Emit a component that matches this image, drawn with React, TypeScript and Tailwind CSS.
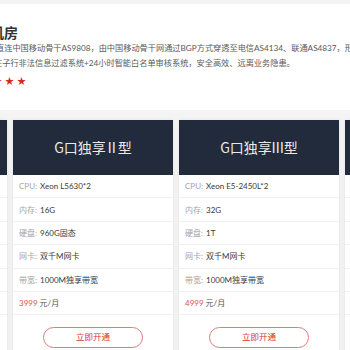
import React from "react";

type Plan = {
  name: string;
  num: string;
  cpu: string;
  ram: string;
  disk: string;
  nic: string;
  bw: string;
  price: string;
};

const plans: Plan[] = [
  { name: "G口独享", num: "Ⅰ", cpu: "Xeon E5-2620*2", ram: "8G", disk: "500G", nic: "双千M网卡", bw: "1000M独享带宽", price: "2999" },
  { name: "G口独享", num: "Ⅱ", cpu: "Xeon L5630*2", ram: "16G", disk: "960G固态", nic: "双千M网卡", bw: "1000M独享带宽", price: "3999" },
  { name: "G口独享", num: "Ⅲ", cpu: "Xeon E5-2450L*2", ram: "32G", disk: "1T", nic: "双千M网卡", bw: "1000M独享带宽", price: "4999" },
  { name: "G口独享", num: "Ⅳ", cpu: "Xeon E5-2650*2", ram: "64G", disk: "2T", nic: "双千M网卡", bw: "1000M独享带宽", price: "5999" },
];

function Row({ label, value }: { label: string; value: string }) {
  return (
    <div className="h-[23.4px] flex items-center px-[6px] border-b border-[#f1f1f1] text-[8px] whitespace-nowrap">
      <span className="text-[#a5a5a5]">{label}:</span>
      <span className="ml-[3px] text-[#3a3a3a]">{value}</span>
    </div>
  );
}

function PlanCard({ plan }: { plan: Plan }) {
  return (
    <div className="w-[160px] shrink-0 bg-white shadow-[0_0_4px_rgba(0,0,0,0.08)]">
      <div
        className="h-[55px] bg-[#212b3b] flex items-center justify-center text-[14px] text-[#e9e9e9]"
        style={{ fontFamily: '"Noto Sans CJK SC", sans-serif' }}
      >
        {plan.name}
        <span className="-mx-[1px]">{plan.num}</span>型
      </div>
      <Row label="CPU" value={plan.cpu} />
      <Row label="内存" value={plan.ram} />
      <Row label="硬盘" value={plan.disk} />
      <Row label="网卡" value={plan.nic} />
      <Row label="带宽" value={plan.bw} />
      <div className="h-[23.4px] flex items-center px-[6px] border-b border-[#f1f1f1] text-[8px]">
        <span className="text-[#e0554b]">{plan.price}</span>
        <span className="ml-[2px] text-[#555]">元/月</span>
      </div>
      <div className="pt-[12px] pb-[12px] flex justify-center">
        <div className="w-[100px] h-[21px] rounded-full border border-[#e07a78] flex items-center justify-center text-[8.5px] text-[#d8332f]">
          立即开通
        </div>
      </div>
    </div>
  );
}

export default function App() {
  return (
    <div
      className="w-[350px] h-[350px] overflow-hidden bg-[#f4f4f4]"
      style={{ fontFamily: 'Lato, "Noto Sans CJK SC", sans-serif' }}
    >
      <div className="mt-[4px] h-[106px] bg-white pt-[21px] overflow-hidden whitespace-nowrap">
        <div className="-ml-[10px] text-[14px] leading-[16px] font-bold text-[#333]">机房</div>
        <div className="text-[8.2px] leading-[15px] text-[#5a5a5a]">
          <div className="-ml-[4px]">
            直连中国移动骨干AS9808，由中国移动骨干网通过BGP方式穿透至电信AS4134、联通AS4837，形成真正的三线
          </div>
          <div className="-ml-[6px]">
            在子行非法信息过滤系统+24小时智能白名单审核系统，安全高效、远离业务隐患。
          </div>
        </div>
        <div className="mt-[3.5px] -ml-[7px] flex gap-[3px] text-[9px] leading-[12px] text-[#d9261c]">
          <span>★</span>
          <span>★</span>
          <span>★</span>
        </div>
      </div>
      <div className="mt-[10px] -ml-[153px] flex gap-[6px]">
        {plans.map((p) => (
          <PlanCard key={p.num} plan={p} />
        ))}
      </div>
    </div>
  );
}
